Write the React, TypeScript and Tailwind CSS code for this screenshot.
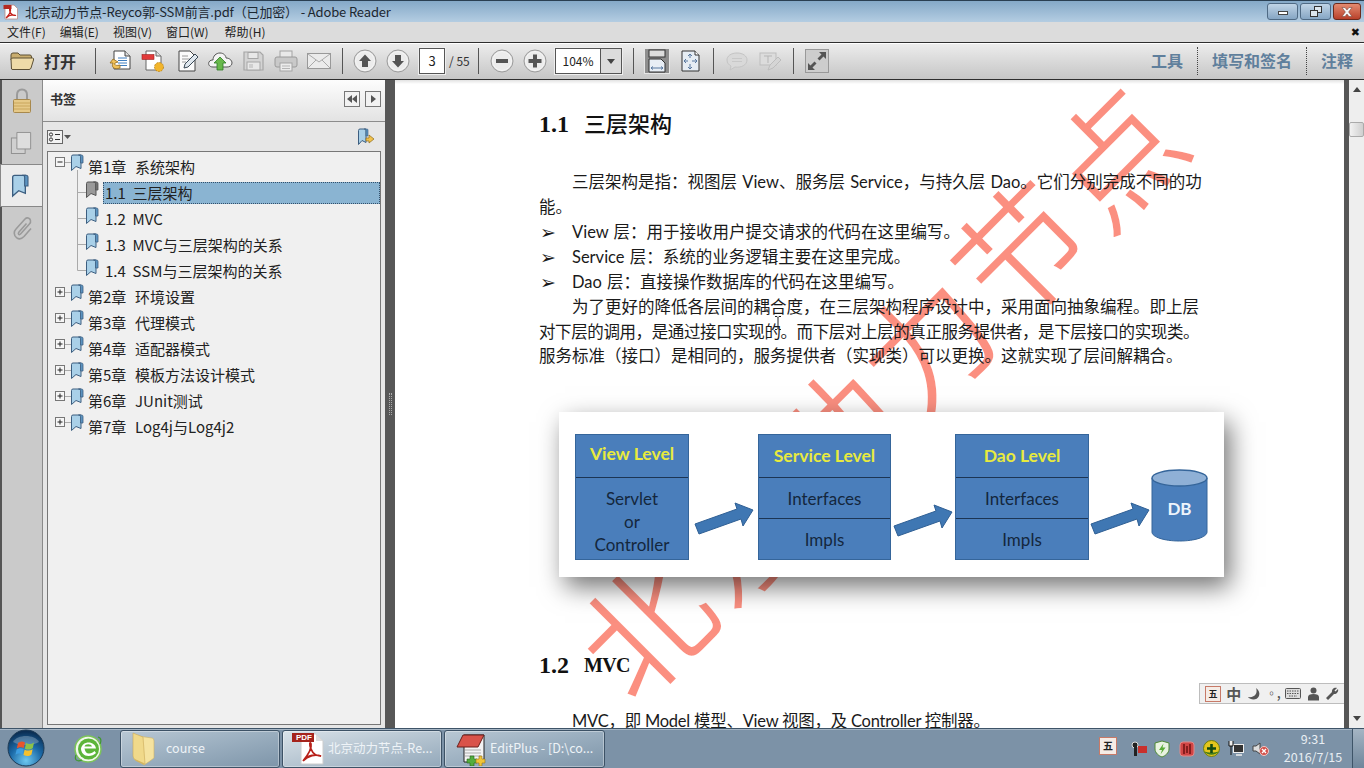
import React from "react";

const CJK = "[font-family:'Noto_Sans_CJK_SC',sans-serif]";

function Bm({ gray = false, size = 1 }: { gray?: boolean; size?: number }) {
  const a = gray ? "#9a9a9a" : "#a9d0e8";
  const b = gray ? "#6f6f6f" : "#5b93c0";
  const s = gray ? "#555" : "#3c5e80";
  return (
    <svg width={14 * size} height={18 * size} viewBox="0 0 14 18" className="shrink-0">
      <path d="M1.5 2.5Q1.5 1 3 1H11V14.5L6 12.5 1.5 16.5Z" fill={a} stroke={s} strokeWidth="1" />
      <path d="M8.5 1H11.5Q13 1 13 2.5V9H10.5V2.5Q10.5 1 8.5 1Z" fill={b} stroke={s} strokeWidth="0.8" />
    </svg>
  );
}

function Gutter({ kind, last, open }: { kind: "parent" | "child"; last?: boolean; open?: boolean }) {
  if (kind === "parent") {
    return (
      <div className="relative h-[26px] w-[40px] shrink-0">
        <svg width="41" height="26" className="absolute left-0 top-0">
          <rect x="7.5" y="3.5" width="9" height="9" fill="#f6f6f6" stroke="#777" />
          <path d="M9.5 8H14.5" stroke="#222" />
          {!open && <path d="M12 5.5V10.5" stroke="#222" />}
          <path d="M17 8.5H23" stroke="#aaa" />
          {open && <path d="M29.5 16V26" stroke="#aaa" />}
        </svg>
        <div className="absolute left-[22px] top-0">
          <Bm />
        </div>
      </div>
    );
  }
  return (
    <div className="relative h-[26px] w-[56px] shrink-0">
      <svg width="56" height="26" className="absolute left-0 top-0">
        <path d={last ? "M29.5 0V12.5H38" : "M29.5 0V26M29.5 12.5H38"} stroke="#aaa" fill="none" />
      </svg>
      <div className="absolute left-[37px] top-[1px]">
        <Bm gray={false} />
      </div>
    </div>
  );
}

function Parent({ t, open }: { t: string; open?: boolean }) {
  return (
    <div className="flex h-[26px] items-center">
      <Gutter kind="parent" open={open} />
      <span className="whitespace-pre text-[15px] leading-[26px] text-[#222] [word-spacing:1px]">{t}</span>
    </div>
  );
}

function Child({ t, last }: { t: string; last?: boolean }) {
  return (
    <div className="flex h-[26px] items-center">
      <Gutter kind="child" last={last} />
      <span className="ml-[1px] whitespace-pre text-[15px] leading-[26px] text-[#222]">{t}</span>
    </div>
  );
}

function Sep({ className }: { className: string }) {
  return <div className={`h-[26px] w-[1px] shrink-0 bg-[#555] ${className}`} />;
}

function Folder() {
  return (
    <svg width="24" height="20" viewBox="0 0 24 20" className="shrink-0">
      <path d="M1 4Q1 2 3 2H8L10 4H20Q21.5 4 21.5 6V9H1Z" fill="#c9ad6e" stroke="#5c5034" />
      <path d="M1.5 18 1 8Q1 7 3 7H22.5Q24 7 23.5 9L21 17Q20.5 18.5 19 18.5H3Q1.5 18.5 1.5 18Z" fill="#eedba8" stroke="#5c5034" />
    </svg>
  );
}

function Doc1() {
  return (
    <svg width="26" height="24" viewBox="0 0 26 24" className="shrink-0">
      <path d="M7 2H18L23 7V20H7Z" fill="#fff" stroke="#444" />
      <path d="M18 2V7H23" fill="#ddd" stroke="#444" />
      <path d="M11 9H20M11 11.5H20M11 14H20M11 16.5H20" stroke="#3f7fc0" />
      <path d="M13 19C7 21 4 18 6 14L3 14 6 10 11 13 8 14C7 16 9 17 13 16Z" fill="#f1c25a" stroke="#93691d" strokeWidth="0.8" />
    </svg>
  );
}

function Doc2() {
  return (
    <svg width="26" height="24" viewBox="0 0 26 24" className="shrink-0">
      <path d="M6 2H16L21 7V21H6Z" fill="#fff" stroke="#666" />
      <path d="M16 2V7H21" fill="#ddd" stroke="#666" />
      <rect x="2" y="5.5" width="12" height="5" fill="#e23a3a" stroke="#922" strokeWidth="0.6" />
      <circle cx="19" cy="18" r="4.5" fill="#f2b52c" stroke="#b87f12" strokeWidth="0.8" strokeDasharray="2 1" />
    </svg>
  );
}

function Doc3() {
  return (
    <svg width="26" height="24" viewBox="0 0 26 24" className="shrink-0">
      <path d="M4 2H15L20 7V22H4Z" fill="#fbfbfb" stroke="#444" />
      <path d="M7 7H13M7 10H15M7 13H11" stroke="#9a9a9a" />
      <path d="M9 19 10 15 20 5 23 8 13 18Z" fill="#dfe7ee" stroke="#3b4a57" />
    </svg>
  );
}

function Cloud() {
  return (
    <svg width="26" height="24" viewBox="0 0 26 24" className="shrink-0">
      <path d="M6 18C2 18 1 15 2 13 3 11 5 11 6 11 6 7 9 4 13 4 17 4 19 7 19 9 22 9 25 11 25 14 25 17 22 18 20 18Z" fill="#f4f4f4" stroke="#555" />
      <path d="M13 8 19 14H16V21H10V14H7Z" fill="#68b84b" stroke="#2f7c25" strokeWidth="0.8" />
    </svg>
  );
}

function Save() {
  return (
    <svg width="26" height="24" viewBox="0 0 26 24" className="shrink-0">
      <path d="M4 3H20L23 6V21H4Z" fill="#d4d4d4" stroke="#a6a6a6" strokeWidth="1.2" />
      <rect x="8" y="3.5" width="10" height="6" fill="#e8e8e8" stroke="#a6a6a6" />
      <rect x="7" y="13" width="13" height="8" fill="#e8e8e8" stroke="#a6a6a6" />
      <path d="M9 16H13M9 18H13" stroke="#b5b5b5" />
    </svg>
  );
}

function Printer() {
  return (
    <svg width="26" height="24" viewBox="0 0 26 24" className="shrink-0">
      <rect x="7" y="2" width="12" height="7" fill="#e9e9e9" stroke="#a3a3a3" />
      <rect x="2" y="8" width="22" height="10" rx="2" fill="#c9c9c9" stroke="#9a9a9a" />
      <rect x="7" y="14" width="12" height="8" fill="#ececec" stroke="#a3a3a3" />
      <path d="M9 17H17M9 19.5H17" stroke="#b5b5b5" />
    </svg>
  );
}

function Mail() {
  return (
    <svg width="26" height="24" viewBox="0 0 26 24" className="shrink-0">
      <rect x="1.5" y="4.5" width="23" height="15" fill="#ebebeb" stroke="#999" />
      <path d="M2 5 13 13 24 5M2 19 10 11M24 19 16 11" fill="none" stroke="#aaa" />
    </svg>
  );
}

function Round({ kind }: { kind: "up" | "down" | "minus" | "plus" }) {
  const paths = {
    up: "M12 5.5 18 12H15V18H9V12H6Z",
    down: "M12 18.5 18 12H15V6H9V12H6Z",
    minus: "M6 10H18V14H6Z",
    plus: "M10 5.5H14V10H18.5V14H14V18.5H10V14H5.5V10H10Z",
  };
  return (
    <svg width="24" height="24" viewBox="0 0 24 24" className="shrink-0">
      <circle cx="12" cy="12" r="11" fill="#dedede" stroke="#9c9c9c" />
      <circle cx="12" cy="12" r="9.5" fill="#ececec" stroke="#f7f7f7" />
      <path d={paths[kind]} fill="#555" />
    </svg>
  );
}

function FitWidth() {
  return (
    <div className="flex h-[26px] w-[26px] shrink-0 items-center justify-center border border-[#e6e6e6] bg-[#8e8e8e]">
      <svg width="18" height="24" viewBox="0 0 18 24">
        <rect x="1" y="1" width="16" height="7" fill="#ddd" stroke="#333" />
        <path d="M1 10H13L17 14V23H1Z" fill="#e8eef5" stroke="#333" />
        <path d="M3 19H15M3 19 5 17.5M3 19 5 20.5M15 19 13 17.5M15 19 13 20.5" stroke="#5878a0" fill="none" />
      </svg>
    </div>
  );
}

function FitPage() {
  return (
    <svg width="26" height="24" viewBox="0 0 26 24" className="shrink-0">
      <path d="M5 2H18L22 6V22H5Z" fill="#e6edf4" stroke="#333" />
      <path d="M18 2V6H22" fill="#fff" stroke="#333" />
      <path d="M13 5V9M11 7 13 5 15 7M13 15V20M11 18 13 20 15 18M7 12H11M9 10 7 12 9 14M15 12H20M18 10 20 12 18 14" stroke="#5878a0" fill="none" />
    </svg>
  );
}

function Bubble() {
  return (
    <svg width="26" height="24" viewBox="0 0 26 24" className="shrink-0">
      <path d="M13 4C7 4 3 7 3 11 3 14 5 16 7 17L6 21 11 18C17 19 23 16 23 11 23 7 19 4 13 4Z" fill="#d9d9d9" stroke="#c4c4c4" />
      <path d="M8 9.5H18M8 12.5H18" stroke="#c8c8c8" />
    </svg>
  );
}

function TextEdit() {
  return (
    <svg width="26" height="24" viewBox="0 0 26 24" className="shrink-0">
      <rect x="3" y="4" width="16" height="12" fill="#dcdcdc" stroke="#bdbdbd" />
      <path d="M7 7H15M11 7V14" stroke="#b5b5b5" />
      <path d="M11 21 13 16 21 8 24 11 16 19Z" fill="#d5d5d5" stroke="#bdbdbd" />
    </svg>
  );
}

function Expand() {
  return (
    <div className="flex h-[24px] w-[24px] shrink-0 items-center justify-center border border-[#999] bg-[#cdcdcd]">
      <svg width="20" height="20" viewBox="0 0 20 20">
        <path d="M12 1H19V8L16.5 5.5 12.5 9.5 10.5 7.5 14.5 3.5ZM8 19H1V12L3.5 14.5 7.5 10.5 9.5 12.5 5.5 16.5Z" fill="#555" />
      </svg>
    </div>
  );
}

function PdfGlyph({ w = 16, h = 16 }: { w?: number; h?: number }) {
  return (
    <svg width={w} height={h} viewBox="0 0 16 16" className="shrink-0">
      <path d="M2 1H11L14.5 4.5V15H2Z" fill="#fff" stroke="#b98b86" strokeWidth="0.8" />
      <rect x="0.5" y="1" width="8" height="4" fill="#b42a22" />
      <path d="M3 14C6 11 8 8 7.5 5 7 3.5 6 5 7 8 8 10.5 10.5 11.5 13 11.5 10 10.5 6 11 3 14Z" fill="none" stroke="#c3211c" strokeWidth="1.2" />
    </svg>
  );
}

function Orb() {
  return (
    <svg width="38" height="38" viewBox="0 0 38 38" className="mb-[2px] shrink-0">
      <defs>
        <radialGradient id="orb" cx="50%" cy="85%" r="80%">
          <stop offset="0" stopColor="#6ec8f0" />
          <stop offset="0.55" stopColor="#1b6aa8" />
          <stop offset="1" stopColor="#0b2f55" />
        </radialGradient>
      </defs>
      <circle cx="19" cy="19" r="18" fill="url(#orb)" stroke="#1d3a55" />
      <path d="M6 13C10 5 28 5 32 13 26 17 12 17 6 13Z" fill="#fff" opacity="0.25" />
      <path d="M11 14C14 12 15.5 12 18 13.5L16.8 19C14.5 17.8 12.5 17.8 9.8 19.5Z" fill="#e8552c" />
      <path d="M19 14C21.5 15.5 24 15.5 27 13.5L25.8 19C23 21 21 21 17.9 19.7Z" fill="#8cc24a" />
      <path d="M9.6 20.5C12.5 18.8 14.5 18.8 16.6 20L15.4 25.4C13 24 11 24 8.5 25.7Z" fill="#3d9de0" />
      <path d="M17.6 20.7C20.6 22 23 22 25.6 20.2L24.5 25.5C22 27.4 19.5 27.4 16.5 26Z" fill="#f6c12e" />
    </svg>
  );
}

function EIcon() {
  return (
    <svg width="30" height="32" viewBox="0 0 30 32" className="shrink-0">
      <circle cx="15" cy="16" r="13" fill="#f2f8ec" stroke="#7cc45a" strokeWidth="1.5" />
      <circle cx="15.5" cy="16" r="10.5" fill="#5cb53a" />
      <path d="M8 15.5C9 11.5 12 9.5 15.5 9.5 19.5 9.5 22.5 12 23 15.5H11.5C12 18.5 13.5 20.5 16 20.5 18.5 20.5 20 19.5 21.5 18L23 20C21 22 18.5 23 15.5 23 11 23 8 19.5 8 15.5ZM11.5 13.5H19C18.5 12 17.2 11.3 15.2 11.3 13.2 11.3 12 12 11.5 13.5Z" fill="#fff" />
      <path d="M3 22C1 27 4 29 9 27M25 4C29 5 28 9 27 11" fill="none" stroke="#3f9a2d" strokeWidth="1.2" />
    </svg>
  );
}

function TaskFolder() {
  return (
    <svg width="26" height="36" viewBox="0 0 26 36" className="shrink-0">
      <path d="M3 3 14 7V34L6 30Q4 29 4 27Z" fill="#d9b95e" />
      <path d="M8 5 22 7Q24 7 24 10V27L20 30 14 34 10 6Z" fill="#f5e3a0" stroke="#cdb167" strokeWidth="0.6" />
      <path d="M3 2 13 6 15 33 6 29Q3 28 3 25Z" fill="#f0d98a" stroke="#c9a957" strokeWidth="0.6" />
    </svg>
  );
}

function TaskPdf() {
  return (
    <div className="relative h-[32px] w-[32px] shrink-0">
      <svg width="32" height="32" viewBox="0 0 32 32" className="absolute left-0 top-0">
        <path d="M9 1H24L31 8V31H9Z" fill="#fff" stroke="#ccc" />
        <path d="M24 1V8H31" fill="#ddd" />
        <rect x="0" y="0" width="22" height="9" fill="#a5231c" />
        <path d="M11 28C16 22 20 16 19 11 18 8 17 11 19 16 21 21 25 23 29 23 24 21 16 22 11 28Z" fill="none" stroke="#b8211a" strokeWidth="1.8" />
      </svg>
      <span className="absolute left-[4px] top-[-1px] text-[8px] font-bold leading-[11px] text-white [font-family:'Liberation_Sans',sans-serif]">PDF</span>
    </div>
  );
}

function TaskEdit() {
  return (
    <svg width="30" height="34" viewBox="0 0 30 34" className="shrink-0">
      <path d="M8 3H28V27L24 30H8Z" fill="#f4f4f4" stroke="#222" />
      <path d="M7 3H28L22 15H1Z" fill="#d9534a" stroke="#6a1f1a" />
      <path d="M9 18H25M9 21H25M9 24H25" stroke="#aaa" />
      <path d="M14 24H18V27H21V31H18V34H14V31H11V27H14Z" fill="#55ad3e" stroke="#23661a" strokeWidth="0.6" />
      <path d="M23 24H26V27H29V31H26V34H23V31H20V27H23Z" fill="#f0c53a" stroke="#94741a" strokeWidth="0.6" />
    </svg>
  );
}

function TaskBtn({ icon, label, active, cls, gap }: { icon: React.ReactNode; label: string; active?: boolean; cls: string; gap: string }) {
  return (
    <div
      className={`flex h-[38px] shrink-0 items-center overflow-hidden rounded-[3px] border border-[#3d5266] shadow-[inset_0_0_0_1px_rgba(255,255,255,0.35)] ${cls} ${
        active ? "bg-gradient-to-br from-[#d9e2e9] via-[#b6c5d1] to-[#93a8ba]" : "bg-gradient-to-br from-[#b9c8d4] via-[#9aaebf] to-[#7e95a9]"
      }`}
    >
      {icon}
      <span className={`whitespace-nowrap text-[12.5px] text-[#eef3f7] ${gap}`}>{label}</span>
    </div>
  );
}

function Wubi({ size = 14 }: { size?: number }) {
  return (
    <span className={`flex shrink-0 items-center justify-center border border-[#c77a68] bg-[#f5ece6] font-bold leading-none text-[#222] ${size === 14 ? "h-[18px] w-[18px] text-[10px]" : "h-[16px] w-[16px] text-[9px]"}`}>
      五
    </span>
  );
}

function Arrow() {
  return (
    <svg width="60" height="34" viewBox="0 0 60 34" className="shrink-0">
      <path d="M1 22 43 7 41 1 59 8 49 24 47 17 5 32Z" fill="#3f77b3" stroke="#2f5f94" />
    </svg>
  );
}

function DiagramBox({ head, rows, headCls, bodyCls }: { head: string; rows: string[]; headCls?: string; bodyCls?: string }) {
  return (
    <div className="flex h-[126px] flex-col border border-[#35659a] bg-[#4a7ebb] text-[#14273d]">
      <div className={`flex h-[43px] shrink-0 items-center justify-center border-b border-[#1c3554] text-[17.5px] font-bold text-[#e8ea3e] ${headCls ?? ""}`}>
        {head}
      </div>
      {rows.map((r, i) => (
        <div key={i} className={`flex flex-1 items-center justify-center whitespace-pre-line text-center text-[17px] leading-[23px] ${bodyCls ?? ""} ${i < rows.length - 1 ? "border-b border-[#1c3554]" : ""}`}>
          {r}
        </div>
      ))}
    </div>
  );
}

function L({ children, cls = "" }: { children: React.ReactNode; cls?: string }) {
  return <div className={`h-[25px] whitespace-pre text-[16.5px] leading-[25px] text-[#1a1a1a] [word-spacing:1px] ${cls}`}>{children}</div>;
}

function B({ children }: { children: React.ReactNode }) {
  return (
    <div className="flex h-[25px] text-[16.5px] leading-[25px] text-[#1a1a1a] [word-spacing:1px]">
      <span className="w-[33px] shrink-0 overflow-hidden pl-[1px] text-[19px] font-bold [font-family:'DejaVu_Sans',sans-serif]">➢</span>
      <span className="whitespace-pre">{children}</span>
    </div>
  );
}

export default function App() {
  return (
    <div className={`flex h-[768px] w-[1364px] flex-col overflow-hidden bg-[#ddd] ${CJK}`}>
      {/* title bar */}
      <div className="flex h-[22px] shrink-0 items-center border-t border-[#2a3f52] bg-gradient-to-b from-[#85a9c8] to-[#b4cde2] pl-[3px]">
        <PdfGlyph />
        <span className="ml-[6px] whitespace-pre text-[13px] leading-[20px] tracking-[-0.15px] text-[#1c2730]">北京动力节点-Reyco郭-SSM前言.pdf（已加密） - Adobe Reader</span>
        <div className="ml-auto flex items-start self-start pr-[3px] pt-[2px]">
          <div className="flex h-[17px] w-[31px] items-center justify-center rounded-[3px] border border-[#4f6a84] bg-gradient-to-b from-[#c0d4e6] to-[#86a6c4]">
            <div className="mt-[3px] h-[4px] w-[10px] border border-[#444] bg-white" />
          </div>
          <div className="ml-[2px] flex h-[17px] w-[31px] items-center justify-center rounded-[3px] border border-[#4f6a84] bg-gradient-to-b from-[#c0d4e6] to-[#86a6c4]">
            <svg width="12" height="11" viewBox="0 0 12 11">
              <rect x="4.5" y="0.5" width="7" height="6" fill="#dce6ee" stroke="#333" />
              <rect x="0.5" y="4.5" width="7" height="6" fill="#dce6ee" stroke="#333" />
            </svg>
          </div>
          <div className="ml-[2px] flex h-[17px] w-[28px] items-center justify-center rounded-[3px] border border-[#6b2a1c] bg-gradient-to-b from-[#e38a70] to-[#b8402a]">
            <svg width="12" height="10" viewBox="0 0 12 10">
              <path d="M1 0.5H4L6 3 8 0.5H11L7.6 5 11 9.5H8L6 7 4 9.5H1L4.4 5Z" fill="#f5f5f5" stroke="#6b3a30" strokeWidth="0.5" />
            </svg>
          </div>
        </div>
      </div>

      {/* menu */}
      <div className="flex h-[20px] shrink-0 items-center gap-[14px] bg-[#dcdcdc] pl-[7px] text-[12px] text-[#222]">
        <span>文件(F)</span>
        <span>编辑(E)</span>
        <span>视图(V)</span>
        <span>窗口(W)</span>
        <span className="ml-[2px]">帮助(H)</span>
        <span className="ml-auto pr-[4px] text-[11px] font-bold leading-none text-[#111] [font-family:'DejaVu_Sans',sans-serif]">✖</span>
      </div>

      {/* toolbar */}
      <div className="flex h-[38px] shrink-0 items-center border-y border-[#2e2e2e] bg-gradient-to-b from-[#ededed] to-[#c6c6c6] pl-[10px] shadow-[inset_0_1px_0_#fff,0_1px_0_#fff]">
        <Folder />
        <span className="ml-[10px] w-[32px] shrink-0 text-[16px] font-bold text-[#333]">打开</span>
        <Sep className="ml-[19px]" />
        <div className="ml-[11px] shrink-0"><Doc1 /></div>
        <div className="ml-[7px] shrink-0"><Doc2 /></div>
        <div className="ml-[9px] shrink-0"><Doc3 /></div>
        <div className="ml-[6px] shrink-0"><Cloud /></div>
        <div className="ml-[7px] shrink-0"><Save /></div>
        <div className="ml-[7px] shrink-0"><Printer /></div>
        <div className="ml-[7px] shrink-0"><Mail /></div>
        <Sep className="ml-[10px]" />
        <div className="ml-[10px] shrink-0"><Round kind="up" /></div>
        <div className="ml-[9px] shrink-0"><Round kind="down" /></div>
        <div className="ml-[9px] flex h-[26px] w-[26px] shrink-0 items-center justify-center border border-[#555] bg-white text-[13px] text-[#222] shadow-[0_0_0_1px_#eee]">3</div>
        <span className="ml-[4px] w-[22px] shrink-0 whitespace-nowrap text-[12px] text-[#333]">/ 55</span>
        <Sep className="ml-[7px]" />
        <div className="ml-[11px] shrink-0"><Round kind="minus" /></div>
        <div className="ml-[9px] shrink-0"><Round kind="plus" /></div>
        <div className="ml-[8px] flex h-[26px] w-[67px] shrink-0 border border-[#555] bg-white shadow-[0_0_0_1px_#eee]">
          <span className="flex w-[45px] items-center justify-center border-r border-[#555] text-[12px] text-[#222]">104%</span>
          <span className="flex flex-1 items-center justify-center bg-[#dcdcdc]">
            <svg width="8" height="5" viewBox="0 0 8 5"><path d="M0 0H8L4 5Z" fill="#444" /></svg>
          </span>
        </div>
        <Sep className="ml-[11px]" />
        <div className="ml-[10px] shrink-0"><FitWidth /></div>
        <div className="ml-[7px] shrink-0"><FitPage /></div>
        <Sep className="ml-[10px]" />
        <div className="ml-[10px] shrink-0"><Bubble /></div>
        <div className="ml-[7px] shrink-0"><TextEdit /></div>
        <Sep className="ml-[10px]" />
        <div className="ml-[11px] shrink-0"><Expand /></div>
        <div className="ml-auto flex h-full items-center pr-[11px] text-[16px] font-bold text-[#5f7f9c]">
          <span className="pb-[3px]">工具</span>
          <div className="mx-[14px] h-[28px] border-l border-dotted border-[#444]" />
          <span className="pb-[3px]">填写和签名</span>
          <div className="mx-[14px] h-[28px] border-l border-dotted border-[#444]" />
          <span className="pb-[3px]">注释</span>
        </div>
      </div>

      {/* main */}
      <div className="flex min-h-0 flex-1">
        {/* tabs */}
        <div className="flex w-[43px] shrink-0 flex-col items-center border-l-[2px] border-r border-l-[#555] border-r-[#8a8a8a] bg-[#cacaca] pt-[7px]">
          <svg width="20" height="26" viewBox="0 0 20 26" className="mt-[1px]">
            <path d="M5 12V7C5 3 7.5 1.5 10 1.5S15 3 15 7V12" fill="none" stroke="#9a9a9a" strokeWidth="2" />
            <rect x="1.5" y="11.5" width="17" height="13" rx="1" fill="#e6c988" stroke="#a8894d" />
            <path d="M2 15H18M2 18H18M2 21H18" stroke="#c9a65d" />
          </svg>
          <svg width="22" height="24" viewBox="0 0 24 26" className="mr-[2px] mt-[17px]">
            <rect x="1.5" y="7.5" width="15" height="17" fill="#d0d0d0" stroke="#8d8d8d" />
            <path d="M7.5 1.5H22.5V19.5H7.5Z" fill="#dedede" stroke="#8d8d8d" />
          </svg>
          <div className="mt-[9px] flex h-[43px] w-[42px] shrink-0 items-center justify-center self-end border border-r-0 border-[#888] bg-[#ececec] pr-[4px]">
            <svg width="20" height="24" viewBox="0 0 14 18">
              <path d="M1.5 2.5Q1.5 1 3 1H11V14.5L6 12.5 1.5 16.5Z" fill="#a9d0e8" stroke="#3c5e80" />
              <path d="M8.5 1H11.5Q13 1 13 2.5V9H10.5V2.5Q10.5 1 8.5 1Z" fill="#5b93c0" stroke="#3c5e80" strokeWidth="0.8" />
            </svg>
          </div>
          <svg width="22" height="26" viewBox="0 0 22 26" className="mt-[9px]">
            <path d="M6 22C2 19 3 15 5 13L14 3C16 1 19 2 19.5 4.5 20 6 19 7.5 18 8.5L9.5 18C8 19.5 6.5 18 8 16L15.5 7.5" fill="none" stroke="#9a9a9a" strokeWidth="1.6" />
            <path d="M6 22C9 24 11.5 22 13 20.5L20 12.5" fill="none" stroke="#9a9a9a" strokeWidth="1.6" />
          </svg>
        </div>

        {/* panel */}
        <div className="flex w-[342px] shrink-0 flex-col bg-[#e6e6e6]">
          <div className="flex h-[42px] shrink-0 items-center border-b border-[#8c8c8c] bg-gradient-to-b from-[#fdfdfd] to-[#e3e3e3] pb-[4px] pl-[7px] pr-[4px]">
            <span className="text-[13px] font-bold text-[#333]">书签</span>
            <div className="ml-auto flex h-[16px] w-[16px] items-center justify-center border border-[#777] bg-[#f2f2f2]">
              <svg width="10" height="8" viewBox="0 0 10 8"><path d="M5 0V8L0 4ZM10 0V8L5 4Z" fill="#555" /></svg>
            </div>
            <div className="ml-[5px] flex h-[16px] w-[16px] items-center justify-center border border-[#777] bg-[#f2f2f2]">
              <svg width="6" height="8" viewBox="0 0 6 8"><path d="M1 0V8L6 4Z" fill="#555" /></svg>
            </div>
          </div>
          <div className="flex h-[29px] shrink-0 items-center px-[4px]">
            <svg width="24" height="16" viewBox="0 0 24 16">
              <rect x="0.5" y="1.5" width="15" height="13" fill="#f2f2f2" stroke="#666" />
              <circle cx="4" cy="5.5" r="1.6" fill="none" stroke="#333" />
              <circle cx="4" cy="10.5" r="1.6" fill="none" stroke="#333" />
              <path d="M8 5.5H13M8 10.5H13" stroke="#333" />
              <path d="M17 6H24L20.5 10Z" fill="#555" />
            </svg>
            <div className="ml-auto mr-[6px] flex">
              <svg width="18" height="18" viewBox="0 0 18 18">
                <path d="M1.5 2.5Q1.5 1 3 1H9V14.5L5 12.5 1.5 16.5Z" fill="#a9d0e8" stroke="#3c5e80" />
                <path d="M7 1H10Q11 1 11 2V8H9V2Q9 1 7 1Z" fill="#5b93c0" stroke="#3c5e80" strokeWidth="0.6" />
                <path d="M9 10H12V7L17 11 12 15V13H9Z" fill="#f0c14d" stroke="#8f6b17" strokeWidth="0.7" />
              </svg>
            </div>
          </div>
          <div className="mx-[4px] mb-[3px] flex-1 border border-[#777] bg-[#f0f0f0] pt-[2px]">
            <Parent t="第1章  系统架构" open />
            <div className="flex h-[26px] items-center">
              <div className="relative h-[26px] w-[55px] shrink-0">
                <svg width="55" height="26" className="absolute left-0 top-0">
                  <path d="M29.5 0V26M29.5 12.5H38" stroke="#aaa" fill="none" />
                </svg>
                <div className="absolute left-[37px] top-[1px]">
                  <Bm gray />
                </div>
              </div>
              <span className="flex h-[22px] flex-1 items-center whitespace-pre border border-dotted border-[#33506b] bg-[#8ab4d2] pl-[1px] text-[15px] text-[#222]">1.1  三层架构</span>
            </div>
            <Child t="1.2  MVC" />
            <Child t="1.3  MVC与三层架构的关系" />
            <Child t="1.4  SSM与三层架构的关系" last />
            <Parent t="第2章  环境设置" />
            <Parent t="第3章  代理模式" />
            <Parent t="第4章  适配器模式" />
            <Parent t="第5章  模板方法设计模式" />
            <Parent t="第6章  JUnit测试" />
            <Parent t="第7章  Log4j与Log4j2" />
          </div>
        </div>

        {/* splitter */}
        <div className="flex w-[10px] shrink-0 items-center justify-center bg-[#575757]">
          <div className="h-[22px] w-[3px] border-x border-dotted border-[#aaa]" />
        </div>

        {/* page */}
        <div className="relative min-w-0 flex-1 overflow-hidden bg-white">
          <div className="absolute left-[481px] top-[306px] -translate-x-1/2 -translate-y-1/2 rotate-[-45deg] whitespace-nowrap text-[130px] leading-none tracking-[3px] text-[#fb8f80] [-webkit-text-stroke:2px_#fff]">
            北京动力节点
          </div>
          <div className="absolute inset-x-0 top-0 h-[4px] bg-gradient-to-b from-[#e2e2e2] to-white" />
          <div className="relative pl-[144px] pt-[29px] [font-family:Lato,'Noto_Sans_CJK_SC',sans-serif]">
            <div className="flex h-[30px] items-center font-bold leading-[30px] text-[#111]">
              <span className="w-[45px] text-[24px] [font-family:'Liberation_Serif',serif]">1.1</span>
              <span className="text-[22px] font-medium">三层架构</span>
            </div>
            <div className="mt-[31px]">
              <L cls="pl-[33px]">三层架构是指：视图层 View、服务层 Service，与持久层 Dao。它们分别完成不同的功</L>
              <L>能。</L>
              <B>View 层：用于接收用户提交请求的代码在这里编写。</B>
              <B>Service 层：系统的业务逻辑主要在这里完成。</B>
              <B>Dao 层：直接操作数据库的代码在这里编写。</B>
              <L cls="pl-[33px]">为了更好的降低各层间的耦合度，在三层架构程序设计中，采用面向抽象编程。即上层</L>
              <L cls="tracking-[-0.4px]">对下层的调用，是通过接口实现的。而下层对上层的真正服务提供者，是下层接口的实现类。</L>
              <L cls="-mt-[1px]">服务标准（接口）是相同的，服务提供者（实现类）可以更换。这就实现了层间解耦合。</L>
            </div>

            <div className="ml-[20px] mt-[43px] flex h-[165px] w-[665px] items-start bg-white pl-[16px] pt-[22px] shadow-[6px_10px_24px_rgba(0,0,0,0.55)]">
              <div className="w-[114px] shrink-0">
                <DiagramBox head="View Level" rows={["Servlet\nor\nController"]} headCls="pb-[4px]" bodyCls="pt-[5px]" />
              </div>
              <div className="mt-[68px] flex w-[69px] shrink-0 justify-center"><Arrow /></div>
              <div className="w-[133px] shrink-0">
                <DiagramBox head="Service Level" rows={["Interfaces", "Impls"]} />
              </div>
              <div className="mt-[70px] flex w-[64px] shrink-0 justify-center"><Arrow /></div>
              <div className="w-[134px] shrink-0">
                <DiagramBox head="Dao Level" rows={["Interfaces", "Impls"]} />
              </div>
              <div className="mt-[68px] flex w-[62px] shrink-0 justify-center"><Arrow /></div>
              <div className="relative mt-[35px] h-[73px] w-[57px] shrink-0">
                <svg width="57" height="73" viewBox="0 0 57 73" className="absolute left-0 top-0">
                  <path d="M1 9V63C1 68 13 72 28.5 72S56 68 56 63V9Z" fill="#4a7ebb" stroke="#35659a" />
                  <ellipse cx="28.5" cy="9" rx="27.5" ry="8" fill="#8fb0d6" stroke="#35659a" strokeWidth="1.4" />
                </svg>
                <span className="absolute left-0 right-0 top-[27px] text-center text-[17px] font-bold text-[#eef4fb]">DB</span>
              </div>
            </div>

            <div className="mt-[73px] flex h-[30px] items-center font-bold leading-[30px] text-[#111] [font-family:'Liberation_Serif',serif]">
              <span className="w-[45px] text-[24px]">1.2</span>
              <span className="text-[20px] tracking-[-0.6px]">MVC</span>
            </div>
            <div className="mt-[29px] h-[25px] whitespace-pre pl-[33px] text-[16.5px] leading-[25px] tracking-[-0.25px] text-[#1a1a1a]">MVC，即 Model 模型、View 视图，及 Controller 控制器。</div>
          </div>

          {/* mouse cursor */}
          <svg width="8" height="14" viewBox="0 0 8 14" className="absolute left-[379px] top-[236px]">
            <path d="M1 .5H3L4 1.5 5 .5H7M4 1.5V12.5M1 13.5H3L4 12.5 5 13.5H7" stroke="#222" fill="none" />
          </svg>

          {/* IME bar */}
          <div className="absolute left-[804px] top-[603px] flex h-[21px] w-[146px] items-center justify-between border border-[#bdbdbd] bg-[#f0f0f0] px-[5px] text-[#555]">
            <Wubi size={13} />
            <span className="text-[15px] font-bold leading-none">中</span>
            <svg width="14" height="14" viewBox="0 0 14 14"><path d="M9 1C11 6 8 11 1 10 3 13 10 14 12 9 13 6 12 3 9 1Z" fill="#555" /></svg>
            <span className="w-[14px] text-[11px] font-bold leading-none">◦,</span>
            <svg width="16" height="11" viewBox="0 0 16 11"><rect x="0.5" y="0.5" width="15" height="10" rx="1" fill="#ddd" stroke="#555" /><path d="M2 3H14M2 5.5H14M4 8H12" stroke="#555" strokeDasharray="1.5 1" /></svg>
            <svg width="13" height="14" viewBox="0 0 13 14"><circle cx="6.5" cy="3.5" r="3" fill="#555" /><path d="M1 13.5V10C1 8 3 7 6.5 7S12 8 12 10V13.5Z" fill="#555" /></svg>
            <svg width="14" height="14" viewBox="0 0 14 14"><path d="M1 11 7 5C6.5 2.5 9 0 12 1L9.5 3.5 10.5 4.5 13 2C14 5 11 7.5 9 7L3 13Z" fill="#555" /></svg>
          </div>
        </div>

        {/* scrollbar */}
        <div className="flex w-[20px] shrink-0 border-l-[5px] border-[#565656] bg-[#eeeeee]">
          <div className="flex flex-1 flex-col items-center">
            <svg width="8" height="5" viewBox="0 0 8 5" className="mt-[7px]"><path d="M4 0 8 5H0Z" fill="#444" /></svg>
            <div className="mt-[30px] h-[15px] w-full rounded-[2px] border border-[#aaa] bg-gradient-to-r from-[#f2f2f2] to-[#cfcfcf]" />
            <svg width="8" height="5" viewBox="0 0 8 5" className="mb-[7px] mt-auto"><path d="M0 0H8L4 5Z" fill="#444" /></svg>
          </div>
        </div>
      </div>

      {/* taskbar */}
      <div className="flex h-[40px] shrink-0 items-center border-t border-[#3e5468] bg-[#7c92a7] shadow-[inset_0_1px_0_#a6b6c5]">
        <div className="ml-[7px] shrink-0"><Orb /></div>
        <div className="ml-[28px] shrink-0"><EIcon /></div>
        <TaskBtn cls="ml-[17px] w-[160px] pl-[9px]" gap="ml-[10px]" icon={<TaskFolder />} label="course" />
        <TaskBtn cls="ml-[2px] w-[160px] pl-[9px]" gap="ml-[4px]" active icon={<TaskPdf />} label="北京动力节点-Re..." />
        <TaskBtn cls="ml-[2px] w-[161px] pl-[11px]" gap="ml-[4px]" icon={<TaskEdit />} label="EditPlus - [D:\co..." />
        <div className="mb-[5px] ml-[494px] shrink-0"><Wubi /></div>
        <div className="ml-[14px] flex shrink-0 items-center">
          <svg width="16" height="16" viewBox="0 0 16 16"><circle cx="4" cy="4" r="3" fill="#222" stroke="#ddd" /><rect x="3" y="6" width="3" height="9" fill="#222" /><rect x="7" y="5" width="9" height="7" fill="#c9302c" /></svg>
          <svg width="16" height="18" viewBox="0 0 16 18" className="ml-[7px]"><path d="M8 1 15 3V9C15 13 11 16 8 17 5 16 1 13 1 9V3Z" fill="#e8f2e0" stroke="#4e8a36" /><path d="M9.5 3.5 5 10H8L6.5 14.5 11.5 7.5H8.5Z" fill="#5aad36" /></svg>
          <svg width="16" height="16" viewBox="0 0 16 16" className="ml-[9px]"><rect x="1" y="1" width="14" height="14" rx="3" fill="#d04545" stroke="#e08a8a" /><path d="M5 3V13M8 5V12M11 3V13" stroke="#6e1010" strokeWidth="1.5" /></svg>
          <svg width="17" height="17" viewBox="0 0 17 17" className="ml-[8px]"><circle cx="8.5" cy="8.5" r="8" fill="#e3c61e" stroke="#6d7f10" /><path d="M1 11C4 16 13 16 16 11 13 13 4 13 1 11Z" fill="#3d7a1a" /><path d="M7.2 4H9.8V7.2H13V9.8H9.8V13H7.2V9.8H4V7.2H7.2Z" fill="#124a12" /></svg>
          <svg width="17" height="17" viewBox="0 0 17 17" className="ml-[8px]"><rect x="5.5" y="4.5" width="10" height="8" fill="#333" stroke="#eee" /><path d="M8 15H14" stroke="#eee" strokeWidth="1.5" /><path d="M1 1V6H5V1M3 6V15" fill="#eee" stroke="#111" /></svg>
          <svg width="17" height="17" viewBox="0 0 17 17" className="ml-[7px]"><path d="M1 6H4L8 3V14L4 11H1Z" fill="#ddd" stroke="#444" /><circle cx="12" cy="11" r="4.5" fill="#d2504a" stroke="#f3c9c5" /><path d="M10 9 14 13M14 9 10 13" stroke="#fff" strokeWidth="1.4" /></svg>
        </div>
        <div className="ml-[14px] flex w-[60px] shrink-0 flex-col items-center pb-[2px] text-[12.5px] leading-[18px] text-[#e8eef3]">
          <span>9:31</span>
          <span>2016/7/15</span>
        </div>
        <div className="ml-auto h-full w-[12px] border-l border-[#3e5468] bg-gradient-to-b from-[#a5b5c4] to-[#6f869b]" />
      </div>
    </div>
  );
}
